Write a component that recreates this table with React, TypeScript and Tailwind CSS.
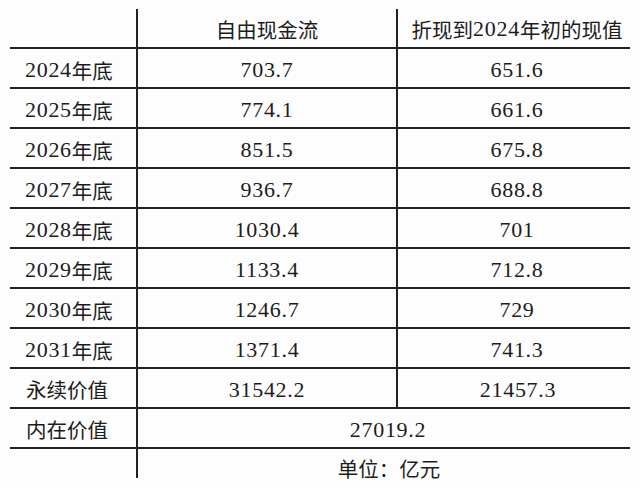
import React from 'react';

const ROWS: [string, string, string][] = [
  ['2024', '703.7', '651.6'],
  ['2025', '774.1', '661.6'],
  ['2026', '851.5', '675.8'],
  ['2027', '936.7', '688.8'],
  ['2028', '1030.4', '701'],
  ['2029', '1133.4', '712.8'],
  ['2030', '1246.7', '729'],
  ['2031', '1371.4', '741.3'],
];

// serif digits, spaced out to the width of the original's monospaced figures
function Num({ children }: { children: React.ReactNode }) {
  return (
    <span className="font-['Liberation_Serif',serif] text-[22px] tracking-[0.7px]">
      {children}
    </span>
  );
}

export default function App() {
  return (
    <div className="h-[488px] w-[640px] overflow-hidden bg-[#fdfdfd] pt-[9px] pl-[10px] font-['Noto_Sans_CJK_SC',sans-serif] text-[#1c1c1c]">
      <div className="grid grid-cols-[128px_260px_232px] text-[20.5px] leading-none">
        {/* Header */}
        <div className="h-[40px] border-r-2 border-b-2 border-[#222]" />
        <div className="flex h-[40px] items-center justify-center border-r-2 border-b-2 border-[#222] pt-[2px]">
          自由现金流
        </div>
        <div className="flex h-[40px] items-center justify-center border-b-2 border-[#222] pt-[2px] pl-[6px]">
          折现到<Num>2024</Num>年初的现值
        </div>

        {ROWS.map(([year, fcf, pv]) => (
          <React.Fragment key={year}>
            <div className="flex h-[40px] items-center border-r-2 border-b-2 border-[#222] pt-[4px] pl-[15px]">
              <Num>{year}</Num>年底
            </div>
            <div className="flex h-[40px] items-center justify-center border-r-2 border-b-2 border-[#222] pt-[4px]">
              <Num>{fcf}</Num>
            </div>
            <div className="flex h-[40px] items-center justify-center border-b-2 border-[#222] pt-[4px] pl-[6px]">
              <Num>{pv}</Num>
            </div>
          </React.Fragment>
        ))}

        <div className="flex h-[40px] items-center border-r-2 border-b-2 border-[#222] pt-[2px] pl-[16px]">
          永续价值
        </div>
        <div className="flex h-[40px] items-center justify-center border-r-2 border-b-2 border-[#222] pt-[4px]">
          <Num>31542.2</Num>
        </div>
        <div className="flex h-[40px] items-center justify-center border-b-2 border-[#222] pt-[4px] pl-[8px]">
          <Num>21457.3</Num>
        </div>

        <div className="flex h-[40px] items-center border-r-2 border-b-2 border-[#222] pt-[2px] pl-[16px]">
          内在价值
        </div>
        <div className="col-span-2 flex h-[40px] items-center justify-center border-b-2 border-[#222] pt-[4px] pl-[8px]">
          <Num>27019.2</Num>
        </div>

        <div className="h-[29px] border-r-2 border-[#222]" />
        <div className="col-span-2 flex h-[29px] items-center justify-center pt-[10px] pl-[10px]">
          单位：亿元
        </div>
      </div>
    </div>
  );
}
